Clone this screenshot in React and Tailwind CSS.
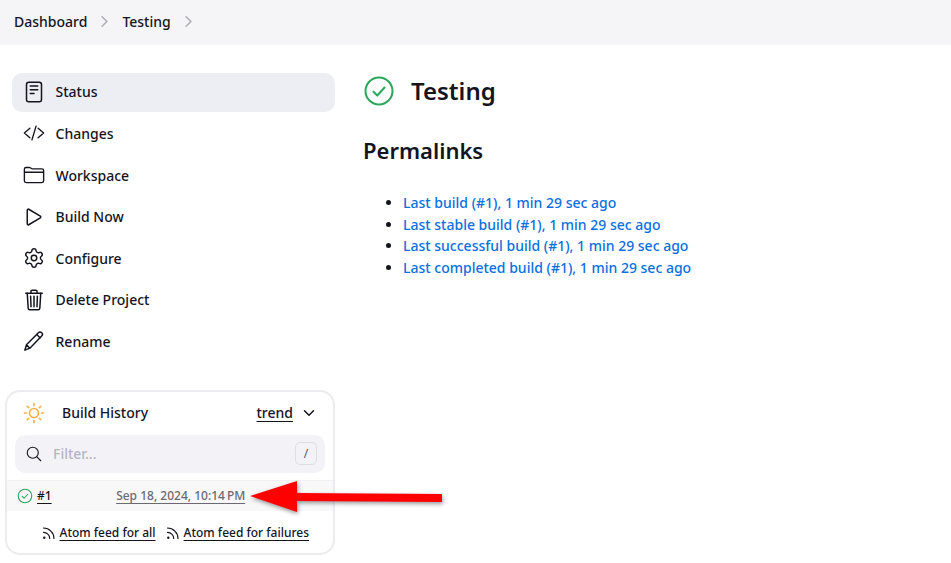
import { Settings } from "lucide-react";
import {
  IoReaderOutline,
  IoCodeSlashOutline,
  IoFolderOutline,
  IoPlayOutline,
  IoTrashOutline,
  IoSearchOutline,
  IoChevronDown,
  IoChevronForward,
} from "react-icons/io5";

const Pencil = () => (
  <svg className="w-[22px] h-[22px]" viewBox="0 0 24 24" fill="none" stroke="currentColor" strokeWidth="1.6" strokeLinecap="round" strokeLinejoin="round">
    <path d="M2 22 3.800 16 16.800 3c1-1 2.500-1 3.600.1 1 1 1 2.500 0 3.500L7.500 19.800 2 22ZM3.800 16l3.700 3.800M15 5l3.800 3.800" />
  </svg>
);

const CheckCircle = ({ className, strokeWidth }) => (
  <svg className={className} viewBox="0 0 32 32" fill="none" stroke="#2aa75a" strokeWidth={strokeWidth} strokeLinecap="round" strokeLinejoin="round">
    <circle cx="16" cy="16" r="13.500" />
    <path d="m10.500 16.800 3.800 3.700 7.200-8" />
  </svg>
);

const Feed = ({ className }) => (
  <svg className={className} viewBox="0 0 14 14" fill="none" stroke="currentColor" strokeWidth="1.200" strokeLinecap="round">
    <circle cx="2.300" cy="11.700" r="1.200" fill="currentColor" stroke="none" />
    <path d="M1.500 6.300a6.200 6.200 0 0 1 6.200 6.200M1.500 2a10.500 10.500 0 0 1 10.500 10.500" />
  </svg>
);

const menu = [
  { label: "Status", icon: <IoReaderOutline className="w-[24px] h-[24px]" />, active: true },
  { label: "Changes", icon: <IoCodeSlashOutline className="w-[22px] h-[22px]" /> },
  { label: "Workspace", icon: <IoFolderOutline className="w-[22px] h-[22px]" /> },
  { label: "Build Now", icon: <IoPlayOutline className="w-[24px] h-[24px]" /> },
  { label: "Configure", icon: <Settings className="w-[22px] h-[22px]" strokeWidth={1.600} /> },
  { label: "Delete Project", icon: <IoTrashOutline className="w-[24px] h-[24px]" /> },
  { label: "Rename", icon: <Pencil /> },
];

const links = [
  "Last build (#1), 1 min 29 sec ago",
  "Last stable build (#1), 1 min 29 sec ago",
  "Last successful build (#1), 1 min 29 sec ago",
  "Last completed build (#1), 1 min 29 sec ago",
];

export default function App() {
  return (
    <div className="relative w-[951px] h-[563px] overflow-hidden bg-white text-[#14141f] font-['Noto_Sans',sans-serif]">
      {/* Breadcrumbs */}
      <div className="flex items-center h-[45px] pb-[2px] pl-[14px] bg-[#f5f5f7] text-[14px] font-medium">
        <span>Dashboard</span>
        <IoChevronForward className="w-[17px] h-[17px] ml-[9px] mr-[9px] text-[#b0b0b8]" />
        <span>Testing</span>
        <IoChevronForward className="w-[17px] h-[17px] ml-[9px] text-[#b0b0b8]" />
      </div>

      <div className="flex">
        {/* Sidebar */}
        <div className="w-[335px] shrink-0">
          <nav className="flex flex-col gap-[2.600px] pt-[28.100px] pl-[12px]">
            {menu.map(({ label, icon, active }) => (
              <div
                key={label}
                className={`flex items-center gap-[9.500px] h-[39px] pb-[1.500px] pl-[10px] rounded-[10px] text-[14px] font-medium ${active ? "bg-[#edeef3]" : ""}`}
              >
                <span className="flex items-center justify-center w-[24px] h-[24px] shrink-0">{icon}</span>
                <span>{label}</span>
              </div>
            ))}
          </nav>

          {/* Build history */}
          <div className="ml-[5px] mt-[27.900px] w-[330px] h-[165px] rounded-[15px] border-2 border-[#ebebf0] bg-white">
            <div className="flex items-center h-[42px] pl-[15px] pr-[16px] text-[14px] font-medium">
              <svg className="w-[24px] h-[24px] shrink-0" viewBox="0 0 24 24" fill="none" stroke="#f9b04e" strokeWidth="1.700" strokeLinecap="round">
                <circle cx="12" cy="12" r="4.500" />
                <path d="M12 2.500v2M12 19.500v2M2.500 12h2M19.500 12h2M5.300 5.300l1.400 1.400M17.300 17.300l1.400 1.400M5.300 18.700l1.400-1.400M17.300 6.700l1.400-1.400" />
              </svg>
              <span className="ml-[16px]">Build History</span>
              <span className="ml-auto underline underline-offset-[3px]">trend</span>
              <IoChevronDown className="w-[16px] h-[16px] ml-[8px]" />
            </div>

            <div className="flex items-center h-[38px] mt-[1px] mx-[8px] pl-[10px] pr-[8px] rounded-[10px] bg-[#f3f3f7] text-[14px]">
              <IoSearchOutline className="w-[18px] h-[18px]" />
              <span className="ml-[10px] text-[#b4b4c4] font-medium">Filter...</span>
              <span className="ml-auto flex items-center justify-center w-[22px] h-[23px] rounded-[5px] border border-[#dedee4] text-[12px] text-[#55555f]">/</span>
            </div>

            <div className="flex items-center h-[31px] mt-[7px] pl-[10px] bg-[#f8f8f9] border-t border-[#f0f0f3] text-[12px]">
              <CheckCircle className="w-[16px] h-[16px] shrink-0" strokeWidth={2.200} />
              <span className="ml-[4px] font-medium underline underline-offset-[3px]">#1</span>
              <span className="ml-[64.500px] font-medium text-[#6a6a72] underline underline-offset-[3px]">Sep 18, 2024, 10:14{"\u202f"}PM</span>
            </div>

            <div className="flex items-center justify-end h-[44px] pr-[24px] text-[12px] font-medium">
              <Feed className="w-[14px] h-[14px] mr-[4px]" />
              <span className="underline underline-offset-[3px]">Atom feed for all</span>
              <Feed className="w-[14px] h-[14px] ml-[10px] mr-[4px]" />
              <span className="underline underline-offset-[3px]">Atom feed for failures</span>
            </div>
          </div>
        </div>

        {/* Main */}
        <div className="flex-1 pl-[28px]">
          <div className="flex items-center pt-[30px]">
            <CheckCircle className="w-[32px] h-[32px] shrink-0" strokeWidth={2} />
            <h1 className="ml-[16px] text-[24px] leading-[32px] font-semibold">Testing</h1>
          </div>
          <h2 className="mt-[27px] text-[22px] leading-[32px] font-semibold">Permalinks</h2>
          <ul className="mt-[26px] pl-[40px] list-disc text-[14px] leading-[21.600px] font-medium text-[#0b6fe0] marker:text-[#14141f]">
            {links.map((link) => (
              <li key={link}>{link}</li>
            ))}
          </ul>
        </div>
      </div>

      {/* Red arrow annotation */}
      <svg className="absolute left-[245px] top-[474px] drop-shadow-[1px_2px_2px_rgba(0,0,0,0.4)]" width="205" height="46" viewBox="0 0 205 46">
        <path d="M5 22 52 7v12l145 1v8L52 27v11L5 22Z" fill="#ff0000" />
      </svg>
    </div>
  );
}
